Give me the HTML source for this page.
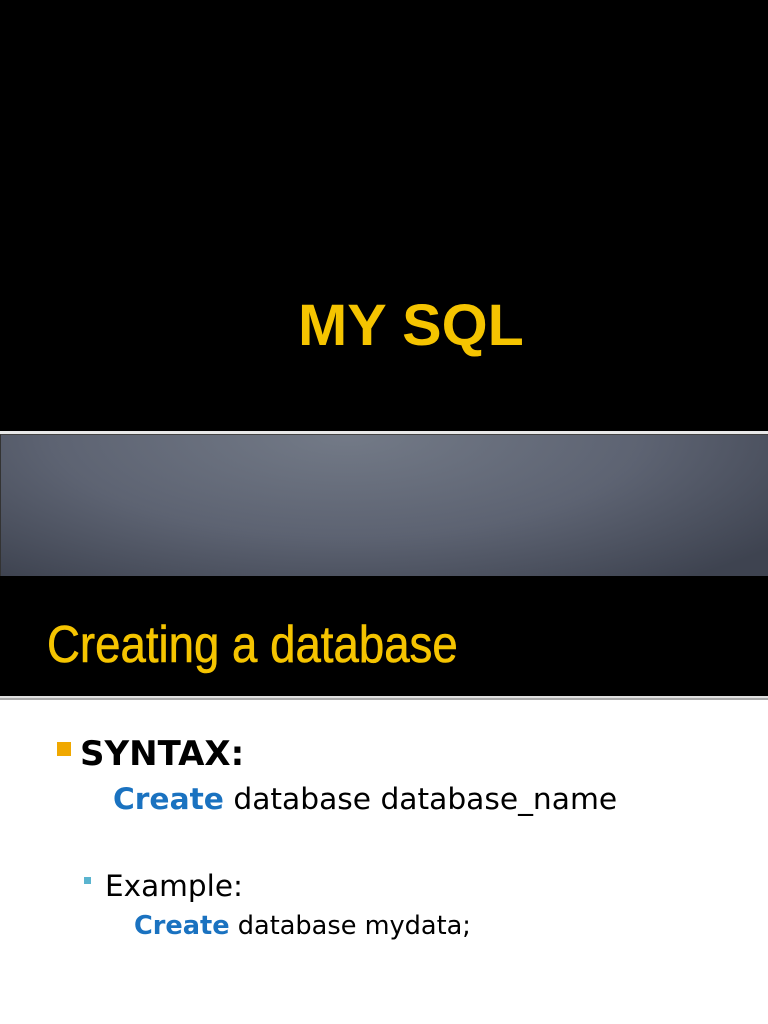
<!DOCTYPE html>
<html><head><style>
body{margin:0;width:768px;height:1024px;position:relative;background:#fff;overflow:hidden;font-family:"DejaVu Sans",sans-serif}
.a{position:absolute}
</style></head><body>
<div class="a" style="left:0;top:0;width:768px;height:431px;background:#000"></div>
<div class="a" style="left:0;top:431px;width:768px;height:3px;background:#e8e8e8"></div>
<div class="a" style="left:0;top:434px;width:768px;height:142px;background:radial-gradient(ellipse 70% 130% at 45% 0%,#737a87 0%,#5d6372 55%,#3e4350 100%);border-top:1px solid #444;border-left:1px solid #333"></div>
<div class="a" style="left:0;top:576px;width:768px;height:120px;background:#000"></div>
<div class="a" style="left:0;top:696px;width:768px;height:2px;background:#e0e0e0"></div>
<div class="a" style="left:0;top:698px;width:768px;height:2px;background:#aaa"></div>
<div class="a" style="left:298px;top:292px;font:bold 58px 'Liberation Sans',sans-serif;color:#f5c400;white-space:nowrap;transform:scaleX(1.02);transform-origin:left">MY SQL</div>
<div class="a" style="left:47px;top:615px;font:52px 'Liberation Sans',sans-serif;color:#f5c400;white-space:nowrap;transform:scaleX(0.877);transform-origin:left;-webkit-text-stroke:0.6px #f5c400">Creating a database</div>
<div class="a" style="left:57px;top:742px;width:14px;height:14px;background:#f0a800"></div>
<div class="a" style="left:80px;top:734px;font:bold 34px 'DejaVu Sans',sans-serif;color:#000">SYNTAX:</div>
<div class="a" style="left:113px;top:782px;font:29.7px 'DejaVu Sans',sans-serif;color:#000;white-space:nowrap"><b style="color:#1a72c0">Create</b> database database_name</div>
<div class="a" style="left:84px;top:877px;width:7px;height:7px;background:#5ab4cf"></div>
<div class="a" style="left:105px;top:869px;font:29.5px 'DejaVu Sans',sans-serif;color:#000">Example:</div>
<div class="a" style="left:134px;top:911px;font:25.6px 'DejaVu Sans',sans-serif;color:#000;white-space:nowrap"><b style="color:#1a72c0">Create</b> database mydata;</div>
</body></html>
